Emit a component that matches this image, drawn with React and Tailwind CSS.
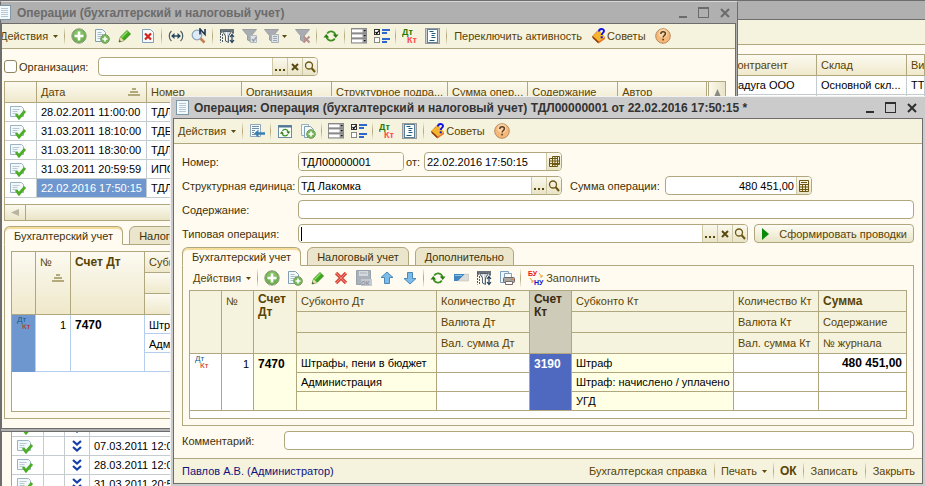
import React from "react";
import clsx from "clsx";

// ---------------- ICONS ----------------
const Svg = ({ children, w = 16 }) => (
  <svg width={w} height="16" viewBox={`0 0 ${w} 16`} fill="none" className="shrink-0" aria-hidden="true">
    {children}
  </svg>
);

const PlusIcon = () => (
  <Svg>
    <circle cx="8" cy="8" r="7.2" fill="#6fb04f" stroke="#8a9a80" />
    <circle cx="8" cy="6.5" r="5" fill="#8cc86e" opacity="0.7" />
    <path d="M8 3.5v9M3.5 8h9" stroke="#fff" strokeWidth="2.6" />
  </Svg>
);

const DocPlusIcon = () => (
  <Svg>
    <path d="M1.5 1.5h7l3 3v9h-10z" fill="#f3f8fb" stroke="#7f9fb5" />
    <path d="M3.5 4.5h4M3.5 6.5h6M3.5 8.5h4M3.5 10.5h3" stroke="#a9bfce" />
    <circle cx="11" cy="11" r="4.3" fill="#79b85a" stroke="#6f9a5c" />
    <path d="M11 8.5v5M8.5 11h5" stroke="#fff" strokeWidth="1.6" />
  </Svg>
);

const CopyPlusIcon = () => (
  <Svg>
    <path d="M1.5 1.5h7v11h-7z" fill="#f3f8fb" stroke="#9ab0c0" />
    <path d="M4.5 3.5h6l3 3v8h-9z" fill="#f3f8fb" stroke="#7f9fb5" />
    <circle cx="11" cy="11" r="4.3" fill="#79b85a" stroke="#6f9a5c" />
    <path d="M11 8.5v5M8.5 11h5" stroke="#fff" strokeWidth="1.6" />
  </Svg>
);

const PencilIcon = () => (
  <Svg>
    <path d="M2 14l1.5-5L10 2.5 13.5 6 7 12.5z" fill="#3fa81c" stroke="#2c7d12" strokeWidth="0.8" />
    <path d="M4.5 9.5L10.5 3.5" stroke="#8fe06a" strokeWidth="1.4" />
    <path d="M2 14l1.5-5 3.5 3.5z" fill="#f1d7b0" />
    <path d="M2 14l.6-2 1.4 1.4z" fill="#333" />
  </Svg>
);

const DocDeleteIcon = () => (
  <Svg>
    <path d="M2.5 1.5h8l3 3v10h-11z" fill="#f6fafc" stroke="#7f9fb5" />
    <path d="M5 5.5l6 6M11 5.5l-6 6" stroke="#d0241c" strokeWidth="2.2" />
  </Svg>
);

const RedCrossIcon = () => (
  <Svg>
    <path d="M3 3l10 10M13 3L3 13" stroke="#d8473a" strokeWidth="3.2" />
    <path d="M3 3l10 10M13 3L3 13" stroke="#f2897e" strokeWidth="1" />
  </Svg>
);

const IntervalIcon = () => (
  <Svg>
    <path d="M3.5 3C.5 5.5.5 10.5 3.5 13M12.5 3c3 2.5 3 7.5 0 10" stroke="#4b5a64" strokeWidth="1.2" />
    <path d="M4 8h8" stroke="#24465f" strokeWidth="1.4" />
    <path d="M6.5 5L3 8l3.5 3zM9.5 5L13 8l-3.500 3z" fill="#24465f" />
  </Svg>
);

const SearchNIcon = () => (
  <Svg>
    <circle cx="6" cy="7" r="4.8" fill="#dcebf7" stroke="#8aa2b8" strokeWidth="1.2" />
    <path d="M9.5 10.5l4 4" stroke="#c47f55" strokeWidth="2.6" />
    <path d="M9 6.5V1l5 5.500V1" stroke="#1d3550" strokeWidth="1.6" />
  </Svg>
);

const FilterIcon = () => (
  <Svg>
    <path d="M1 2h14M1 4h2M13 4h2" stroke="#3d4a55" strokeWidth="1.6" />
    <path d="M1.500 2v12.500M3.500 6v8.500M14 4v3" stroke="#4d5a65" strokeDasharray="2 1" />
    <path d="M3.500 3.500h9L9.500 8V14.500l-3-1.500V8z" fill="#cfd5da" stroke="#55616b" />
    <path d="M7.500 4.500v8" stroke="#fff" />
    <path d="M13 7v7M11 12l2 2.500 2-2.500M11 9l2-2.500L15 9" stroke="#1f3d5c" strokeWidth="1.2" />
  </Svg>
);

const GrayFunnel = ({ kind }) => (
  <Svg>
    <path d="M0.5 1.5h14L9.5 7.500V14l-4-2v-4.500z" fill="#a9adb1" stroke="#9a9ea2" />
    {kind === "check" && (
      <>
        <path d="M8.5 7.5h6v7h-6z" fill="#dfe3e6" stroke="#b3bac0" />
        <path d="M10 11l1.500 2 3-4" stroke="#9aa1a7" strokeWidth="1.5" />
      </>
    )}
    {kind === "list" && (
      <>
        <path d="M7.5 6.5h7v8h-7z" fill="#e0e4e7" stroke="#aab1b7" />
        <path d="M9 8.5h4M9 10.5h4M9 12.5h4" stroke="#9aa8b5" />
      </>
    )}
    {kind === "cross" && <path d="M8.5 8.5l6 6M14.500 8.500l-6 6" stroke="#b98f8d" strokeWidth="2" />}
  </Svg>
);

const RefreshShape = () => (
  <>
    <path d="M4.200 5.500C6 2.500 11 2.500 12.500 7" stroke="#3d8f1f" strokeWidth="1.8" />
    <path d="M11.800 10.500C10 13.500 5 13.500 3.500 9" stroke="#3d8f1f" strokeWidth="1.8" />
    <path d="M9.800 6.500h5.700L12.700 10z" fill="#2d7a12" />
    <path d="M.5 9.500h5.700L3.300 6z" fill="#2d7a12" />
  </>
);

const RefreshIcon = () => (
  <Svg>
    <RefreshShape />
  </Svg>
);

const WindowRefreshIcon = () => (
  <Svg>
    <rect x="1.5" y="2.5" width="13" height="12" fill="#fbfdfd" stroke="#6c8ba3" />
    <path d="M1.500 3.500h13" stroke="#4f7695" strokeWidth="2" />
    <g transform="translate(2.500 4) scale(0.700)">
      <RefreshShape />
    </g>
  </Svg>
);

const ListIcon = () => (
  <Svg>
    {[0, 5, 10].map((y) => (
      <g key={y}>
        <rect x="0.5" y={y + 0.5} width="15" height="4.5" fill="#9c9c9c" stroke="#8a8a8a" />
        <rect x="1" y={y + 1.5} width="10.5" height="2.8" fill="#fff" />
        <path d={`M12.5 ${y + 2}h2.5l-1.250 1.600z`} fill="#111" />
      </g>
    ))}
  </Svg>
);

const CheckListIcon = () => (
  <Svg>
    <rect x="0.5" y="1.5" width="5" height="5" fill="#fff" stroke="#333" />
    <path d="M1.5 4l1.300 1.500L5 2.500" stroke="#000" strokeWidth="1.2" />
    <rect x="0.5" y="9.5" width="5" height="5" fill="#fff" stroke="#888" />
    <path d="M8 2h8M8 5h5M8 11h8M8 14h5" stroke="#2f66cc" strokeWidth="2" />
  </Svg>
);

const DtKtIcon = () => (
  <Svg>
    <text x="0" y="7" fontSize="9" fontWeight="700" fill="#2a7a00">Дт</text>
    <text x="5" y="15" fontSize="9" fontWeight="700" fill="#ff4a4a">Кт</text>
  </Svg>
);

const DtKtSmall = () => (
  <Svg>
    <text x="1" y="7" fontSize="8" fill="#0f5c86">Дт</text>
    <text x="6" y="14" fontSize="8" fill="#c62316">Кт</text>
  </Svg>
);

const ReportIcon = () => (
  <Svg>
    <rect x="0.5" y="0.5" width="14" height="15" fill="#c9cdd1" stroke="#9a9a9a" />
    <rect x="2.5" y="1.5" width="10" height="13" fill="#fff" stroke="#5b7f99" />
    <path d="M4.500 3.500h4M6.500 5.500h4M6.500 7.500h3M6.500 9.500h4M4.500 12.500h5" stroke="#1b5c80" />
  </Svg>
);

const BookIcon = () => (
  <Svg>
    <path d="M7 2L1 8.500l6 6.500 2-1L5 7.500z" fill="#b4581c" />
    <path d="M8 2L1.500 8l6 5.500L14 9z" fill="#f6b52e" />
    <path d="M1.500 8l6 5.500v2L1.500 10z" fill="#8a3d10" />
    <path d="M7.500 13.500L14 9v2l-6.500 4.500z" fill="#e87722" />
    <path d="M8 3.500C8 .5 13 .2 13 3c0 1.800-2.300 2-2.300 4" stroke="#1414e0" strokeWidth="2" />
    <rect x="9.7" y="8.3" width="2" height="2" fill="#1414e0" />
  </Svg>
);

const HelpIcon = () => (
  <Svg>
    <circle cx="8" cy="8" r="7.3" fill="#f6b878" stroke="#b98a5c" />
    <circle cx="8" cy="5.5" r="4.5" fill="#fbd9ae" opacity="0.8" />
    <path d="M5.800 6c0-3 4.600-2.800 4.600-.2C10.400 7.500 8.100 7.500 8.100 9.500" stroke="#5b3b22" strokeWidth="1.5" />
    <rect x="7.3" y="10.8" width="1.6" height="1.6" fill="#5b3b22" />
  </Svg>
);

const DocArrowIcon = () => (
  <Svg>
    <path d="M1.5 1.5h10v12h-10z" fill="#f6fafc" stroke="#8fa7b8" />
    <path d="M3 3.5h7M3 5.5h7M3 7.5h3M3 9.5h2M3 11.5h3" stroke="#6f8fa6" />
    <path d="M5 10.500l4.500-4v2.700H16v2.600H9.500v2.700z" fill="#3a7fb0" />
  </Svg>
);

const SaveGrayIcon = () => (
  <Svg>
    <path d="M0.5 0.5h14v14h-14z" fill="#a9b2ba" stroke="#98a2aa" />
    <rect x="3" y="1" width="9" height="5" fill="#d3d9dd" />
    <path d="M4 3h7" stroke="#a9b2ba" />
    <rect x="5" y="9" width="11" height="7" fill="#c3c9ce" />
    <text x="5" y="15" fontSize="6" fontWeight="700" fill="#8d979f">ОК</text>
  </Svg>
);

const ArrowIcon = ({ down }) => (
  <Svg>
    <path
      d={down ? "M8 14L2 8.500h3.500V2.500h5v6H14z" : "M8 2L2 7.500h3.500v6h5v-6H14z"}
      fill="#7dbbe8"
      stroke="#4b88b8"
      strokeLinejoin="round"
    />
  </Svg>
);

const SwapIcon = () => (
  <Svg>
    <path d="M1 4h11L5 11H1z" fill="#3f86c0" />
    <path d="M12 4h3.500v7H5z" fill="#dcdcd8" stroke="#b5b5b0" strokeWidth="0.5" />
    <path d="M2 5.500h7" stroke="#8fc0e6" />
  </Svg>
);

const PrintIcon = () => (
  <Svg>
    <path d="M1.5 1.5h8v11h-8z" fill="#eef5fa" stroke="#7fa0ba" />
    <path d="M5.5 3.5h7v4h-7z" fill="#f8fbfd" stroke="#7fa0ba" />
    <rect x="4.5" y="7.5" width="11" height="5" rx="1" fill="#a9a5a2" stroke="#6d6864" />
    <path d="M6.5 11.5h7v3h-7z" fill="#fff" stroke="#7a6d66" />
    <path d="M12 9.5h2" stroke="#e0762c" />
  </Svg>
);

const FillIcon = () => (
  <Svg>
    <text x="0" y="6" fontSize="7" fontWeight="700" fill="#ee1111">БУ</text>
    <text x="6" y="15" fontSize="7" fontWeight="700" fill="#1414c8">НУ</text>
    <path d="M11 3l3 4M12 7h2V5M2 8l3 4M3 12h2v-2" stroke="#f0a030" />
  </Svg>
);

const PostedIcon = () => (
  <Svg w={17}>
    <path d="M1.5 2.5h11l2 2v8h-13z" fill="#f3f8fb" stroke="#9cb3c3" />
    <path d="M3.5 5.5h7M3.5 7.5h5M3.5 9.5h4" stroke="#b9cad6" />
    <path d="M7 10l3 4 6-7" stroke="#4cae24" strokeWidth="2.8" />
  </Svg>
);

const ChevronsIcon = () => (
  <Svg w={10}>
    <path d="M1 3l4 3.500L9 3M1 9l4 3.500L9 9" stroke="#123fa8" strokeWidth="2.2" />
  </Svg>
);

const PageIcon = () => (
  <svg width="13" height="15" viewBox="0 0 13 15" fill="none" className="shrink-0" aria-hidden="true">
    <rect x="0.5" y="0.5" width="12" height="14" fill="#f4f9fb" stroke="#7f98a8" />
    <path d="M3 3.5h7M3 5.5h7M3 7.5h7M3 9.5h7M3 11.5h7" stroke="#b5c8d4" />
  </svg>
);

const SortMark = () => (
  <svg width="12" height="8" viewBox="0 0 12 8" className="shrink-0" aria-hidden="true">
    <path d="M4 0h4v2H4zM2 3h8v2H2zM0 6h12v2H0z" fill="#b3aa7c" />
  </svg>
);

const Caret = () => (
  <svg width="5" height="3" viewBox="0 0 5 3" className="shrink-0" aria-hidden="true">
    <path d="M0 0h5L2.500 3z" fill="#5a4a10" />
  </svg>
);

const Magnifier = () => (
  <svg width="12" height="12" viewBox="0 0 12 12" fill="none" aria-hidden="true">
    <circle cx="5" cy="4.5" r="3.5" stroke="#6b5712" strokeWidth="1.3" />
    <path d="M7.500 7l3.500 4" stroke="#6b5712" strokeWidth="2" />
  </svg>
);

const Cross = () => (
  <svg width="8" height="8" viewBox="0 0 8 8" aria-hidden="true">
    <path d="M1 1l6 6M7 1L1 7" stroke="#5a4a10" strokeWidth="2" />
  </svg>
);

const Dots = () => (
  <svg width="10" height="10" viewBox="0 0 10 10" fill="#5a4a10" aria-hidden="true">
    <path d="M0 7h2v2H0zM4 7h2v2H4zM8 7h2v2H8z" />
  </svg>
);

const CalendarIcon = () => (
  <svg width="11" height="12" viewBox="0 0 11 12" fill="none" aria-hidden="true">
    <path d="M3.5 0.5h7v8h-7z" stroke="#6b5712" />
    <path d="M0.5 2.5h8v8h-8zM0.5 5h10M0.5 7.5h10M3.5 2v9M6 1v10M8.5 1v8" stroke="#6b5712" />
  </svg>
);

const CalcIcon = () => (
  <svg width="10" height="12" viewBox="0 0 10 12" fill="none" aria-hidden="true">
    <path d="M0.5 0.5h9v11h-9z" stroke="#6b5712" />
    <path d="M2 2.5h6" stroke="#6b5712" />
    <path d="M1 4.500h8M1 7h8M1 9.500h8M3.500 5v6M6.500 5v6" stroke="#6b5712" />
  </svg>
);

// ---------------- SHARED PARTS ----------------
const Sep = () => (
  <span className="w-[5px] flex justify-center shrink-0">
    <span className="w-px h-[18px] bg-gradient-to-b from-[#f5f2de] via-[#b0a67a] to-[#f5f2de]" />
  </span>
);

const Tool = ({ label, children }) => (
  <button type="button" aria-label={label} className="w-[23px] h-5 shrink-0 flex items-center justify-center">
    {children}
  </button>
);

const TextButton = ({ children, className }) => (
  <button type="button" className={clsx("flex items-center h-5 whitespace-nowrap text-[#594304]", className)}>
    {children}
  </button>
);

const ActionsMenu = () => (
  <TextButton className="gap-[5px] px-1">
    Действия
    <Caret />
  </TextButton>
);

const WindowControls = ({ color }) => (
  <div className={clsx("flex items-center gap-[11px]", color)}>
    <button type="button" aria-label="Свернуть" className="h-[11px] flex items-end">
      <span className="w-2 h-[2px] bg-current" />
    </button>
    <button type="button" aria-label="Развернуть" className="size-[11px] border border-current border-t-2" />
    <button type="button" aria-label="Закрыть окно">
      <svg width="10" height="10" viewBox="0 0 10 10" aria-hidden="true">
        <path d="M1 1l8 8M9 1L1 9" stroke="currentColor" strokeWidth="2" />
      </svg>
    </button>
  </div>
);

const fieldIcons = {
  dots: { label: "Выбрать", icon: <Dots /> },
  clear: { label: "Очистить", icon: <Cross /> },
  open: { label: "Открыть", icon: <Magnifier /> },
  calendar: { label: "Календарь", icon: <CalendarIcon /> },
  calc: { label: "Калькулятор", icon: <CalcIcon /> },
};

const Field = ({ id, value = "", buttons = [], className, inputClass, caret }) => (
  <div className={clsx("flex items-center h-[19px] border border-[#b0a77f] rounded-[4px] bg-white overflow-hidden", className)}>
    {caret && <span className="w-px h-[14px] ml-[2px] bg-black" />}
    <input
      id={id}
      defaultValue={value}
      className={clsx("flex-1 min-w-0 h-full px-[2px] text-black outline-none", inputClass)}
    />
    {buttons.map((name) => (
      <button
        key={name}
        type="button"
        aria-label={fieldIcons[name].label}
        className="w-[15px] h-full shrink-0 flex items-center justify-center border-l border-[#cfc8a4] bg-gradient-to-b from-[#fbf9ee] to-[#e9e4c6]"
      >
        {fieldIcons[name].icon}
      </button>
    ))}
  </div>
);

const Tab = ({ active, children }) => (
  <button
    type="button"
    role="tab"
    aria-selected={!!active}
    className={clsx(
      "h-[19px] px-[9px] border border-[#b0a77f] rounded-t-[6px] whitespace-nowrap text-[#3f3208]",
      active ? "bg-[#fffbf0] border-b-[#fffbf0] shadow-[inset_0_2px_0_#f7dd9b]" : "bg-[#ebe5cb]"
    )}
  >
    {children}
  </button>
);

const headGradient = "bg-gradient-to-b from-[#fcfaf1] to-[#efe8ca]";

// ---------------- DOCUMENT JOURNAL (bottom window) ----------------
const journalRows = Array.from({ length: 22 }, () => ({}));
journalRows[0] = { partner: "Радуга ООО", store: "Основной скл...", kind: "ТТН" };
journalRows[19] = { date: "07.03.2011 12:00:00" };
journalRows[20] = { date: "28.03.2011 12:00:00" };
journalRows[21] = { date: "31.03.2011 20:59:59" };

const JournalWindow = () => {
  const cell = "border-r border-b border-[#c5ccd0] h-[19px] p-0 whitespace-nowrap overflow-hidden";
  const head = "border-r border-b border-[#b0a77f] h-[21px] px-1 text-left font-normal whitespace-nowrap overflow-hidden";
  return (
    <section className="h-full overflow-hidden border-l-2 border-t border-[#6d6d6d] bg-[#fffbf0]">
      <div className="h-[18px] bg-[#b0b0b0]" />
      <div className="h-[26px] border-y border-t-[#6d6d6d] border-b-[#b0a77f] bg-[#f5f2de]" />
      <div className="mt-[9px] ml-[9px] border-l border-t border-[#b0a77f] bg-white">
        <table className="w-full table-fixed border-separate border-spacing-0">
          <colgroup>
            <col className="w-8" />
            <col className="w-[21px]" />
            <col className="w-[25px]" />
            <col />
            <col className="w-[90px]" />
            <col className="w-[90px]" />
            <col className="w-[18px]" />
          </colgroup>
          <thead className={clsx(headGradient, "text-[#594304]")}>
            <tr>
              <th className={head} />
              <th className={head} />
              <th className={head} />
              <th className={head} />
              <th className={head}>Контрагент</th>
              <th className={head}>Склад</th>
              <th className={head}>Вид</th>
            </tr>
          </thead>
          <tbody className="text-black">
            {journalRows.map((row, index) => (
              <tr key={index}>
                <td className={clsx(cell, "pl-1")}><PostedIcon /></td>
                <td className={cell} />
                <td className={cell}>
                  <div className="flex justify-center"><ChevronsIcon /></div>
                </td>
                <td className={clsx(cell, "pl-1")}>{row.date}</td>
                <td className={clsx(cell, "pl-1")}>{row.partner}</td>
                <td className={clsx(cell, "pl-1")}>{row.store}</td>
                <td className={clsx(cell, "pl-1")}>{row.kind}</td>
              </tr>
            ))}
          </tbody>
        </table>
      </div>
    </section>
  );
};

// ---------------- OPERATIONS LIST ----------------
const operations = [
  { date: "28.02.2011 11:00:00", number: "ТДЛ" },
  { date: "31.03.2011 18:10:00", number: "ТДЕ" },
  { date: "31.03.2011 18:30:00", number: "ТДЛ" },
  { date: "31.03.2011 20:59:59", number: "ИПО" },
  { date: "22.02.2016 17:50:15", number: "ТДЛ", selected: true },
];

const OperationsTable = () => {
  const head = "border-r border-b border-[#b0a77f] h-[21px] px-1 text-left font-normal whitespace-nowrap overflow-hidden";
  const cell = "border-r border-b border-[#c5ccd0] h-[19px] p-0 pl-1 whitespace-nowrap overflow-hidden";
  return (
    <div className="border border-[#b0a77f] bg-white">
      <div className="flex">
        <table className="flex-1 table-fixed border-separate border-spacing-0">
          <colgroup>
            <col className="w-8" />
            <col className="w-[110px]" />
            <col className="w-[95px]" />
            <col className="w-[90px]" />
            <col className="w-[116px]" />
            <col className="w-20" />
            <col className="w-[90px]" />
            <col />
          </colgroup>
          <thead className={clsx(headGradient, "text-[#594304]")}>
            <tr>
              <th className={head} />
              <th className={head}>
                <div className="flex items-center justify-between pr-[2px]">
                  Дата
                  <SortMark />
                </div>
              </th>
              <th className={head}>Номер</th>
              <th className={head}>Организация</th>
              <th className={head}>Структурное подра...</th>
              <th className={head}>Сумма опер...</th>
              <th className={head}>Содержание</th>
              <th className={head}>Автор</th>
            </tr>
          </thead>
          <tbody className="text-black">
            {operations.map((row) => (
              <tr key={row.date}>
                <td className={cell}><PostedIcon /></td>
                <td className={clsx(cell, row.selected && "bg-[#6f97cf] text-white")}>{row.date}</td>
                <td className={cell}>{row.number}</td>
                <td className={cell} />
                <td className={cell} />
                <td className={cell} />
                <td className={cell} />
                <td className={cell} />
              </tr>
            ))}
          </tbody>
        </table>
        <div className="w-[17px] ml-px border-l border-[#b0a77f] bg-gradient-to-r from-[#fbf9ee] to-[#e9e4c6]">
          <div className="h-[21px] flex items-center justify-center">
            <svg width="7" height="8" viewBox="0 0 7 8" aria-hidden="true">
              <path d="M3.5 0L7 8H0z" fill="#8a8a80" />
            </svg>
          </div>
        </div>
      </div>
      <div className="mt-[6px] h-4 flex border-t border-[#b0a77f] bg-gradient-to-b from-[#fbf9ee] to-[#e9e4c6]">
        <div className="w-[21px] flex items-center justify-center border-r border-[#b0a77f]">
          <svg width="8" height="7" viewBox="0 0 8 7" aria-hidden="true">
            <path d="M8 0v7L0 3.500z" fill="#b9b4a0" />
          </svg>
        </div>
      </div>
    </div>
  );
};

const OperationEntries = () => {
  const head = "border-r border-b border-[#b0a77f] px-1 text-left align-top font-normal whitespace-nowrap";
  const cell = "border-r border-b border-[#b5cdee] px-1 align-top whitespace-nowrap";
  return (
    <div className="border border-[#b0a77f] bg-white pb-[39px]">
      <table className="w-full table-fixed border-separate border-spacing-0">
        <colgroup>
          <col className="w-6" />
          <col className="w-[35px]" />
          <col className="w-[74px]" />
          <col />
        </colgroup>
        <thead className="bg-[#f5f0da] text-[#594304]">
          <tr>
            <th rowSpan={3} className={clsx(head, headGradient)} />
            <th rowSpan={3} className={clsx(head, headGradient, "py-[2px]")}>
              №
              <div className="flex justify-end pt-1 pr-[2px]"><SortMark /></div>
            </th>
            <th rowSpan={3} className={clsx(head, headGradient, "py-[2px] text-[12px]")}>
              <b>Счет Дт</b>
            </th>
            <th className={clsx(head, headGradient, "h-[21px] py-[2px]")}>Субконто Дт</th>
          </tr>
          <tr><th className={clsx(head, headGradient, "h-[21px]")} /></tr>
          <tr><th className={clsx(head, headGradient, "h-[21px]")} /></tr>
        </thead>
        <tbody className="text-black">
          <tr>
            <td rowSpan={3} className="border-r border-[#b5cdee] bg-[#6f97cf] align-top pl-1"><DtKtSmall /></td>
            <td rowSpan={3} className={clsx(cell, "text-right pt-[2px]")}>1</td>
            <td rowSpan={3} className={clsx(cell, "text-[12px] font-bold pt-[2px]")}>7470</td>
            <td className={clsx(cell, "h-[19px] pt-[2px]")}>Штрафы</td>
          </tr>
          <tr><td className={clsx(cell, "h-[19px] pt-[2px]")}>Администрация</td></tr>
          <tr><td className={clsx(cell, "h-[19px]")} /></tr>
        </tbody>
      </table>
    </div>
  );
};

const OperationsWindow = () => (
  <section className="absolute left-0 right-[187px] top-px border-x border-b border-[#6d6d6d] border-t border-t-[#d8d8d8] bg-[#b0b0b0] pb-[2px] pr-px">
    <div className="h-[21px] flex items-center justify-between pr-[6px] text-[#6b6b6b]">
      <div className="flex items-center gap-[6px] -ml-[3px]">
        <PageIcon />
        <h2 className="text-[12px] font-bold whitespace-nowrap">Операции (бухгалтерский и налоговый учет)</h2>
      </div>
      <WindowControls color="text-[#6b6b6b]" />
    </div>
    <div className="border border-[#6d6d6d] bg-[#fffbf0]">
      {/* Toolbar */}
      <div className="h-[25px] flex items-center border-b border-[#b0a77f] bg-[#f5f2de] overflow-hidden">
        <TextButton className="gap-[5px] -ml-[2px] pr-1">
          Действия
          <Caret />
        </TextButton>
        <Sep />
        <Tool label="Добавить"><PlusIcon /></Tool>
        <Tool label="Добавить копированием"><DocPlusIcon /></Tool>
        <Tool label="Изменить"><PencilIcon /></Tool>
        <Tool label="Пометить на удаление"><DocDeleteIcon /></Tool>
        <Sep />
        <Tool label="Интервал дат"><IntervalIcon /></Tool>
        <Tool label="Поиск по номеру"><SearchNIcon /></Tool>
        <Sep />
        <Tool label="Отбор и сортировка"><FilterIcon /></Tool>
        <Tool label="Отбор по значению"><GrayFunnel kind="check" /></Tool>
        <button type="button" aria-label="История отборов" className="w-[30px] h-5 shrink-0 flex items-center gap-[2px] pl-[3px]">
          <GrayFunnel kind="list" />
          <Caret />
        </button>
        <Tool label="Отключить отбор"><GrayFunnel kind="cross" /></Tool>
        <Sep />
        <Tool label="Обновить"><RefreshIcon /></Tool>
        <Sep />
        <Tool label="Список"><ListIcon /></Tool>
        <Tool label="Настройка списка"><CheckListIcon /></Tool>
        <Sep />
        <Tool label="Дт/Кт"><DtKtIcon /></Tool>
        <Tool label="Отчет"><ReportIcon /></Tool>
        <Sep />
        <TextButton className="px-[5px]">Переключить активность</TextButton>
        <TextButton className="pl-1 pr-[6px]">
          <BookIcon />
          Советы
        </TextButton>
        <Tool label="Справка"><HelpIcon /></Tool>
      </div>

      <div className="pl-[2px] pr-[9px] pb-[9px]">
        {/* Filter */}
        <div className="flex items-center pt-2 pb-[5px]">
          <input
            id="org-filter"
            type="checkbox"
            className="appearance-none size-[13px] border border-[#8f8660] rounded-[3px] bg-white"
          />
          <label htmlFor="org-filter" className="w-[81px] pl-[2px] text-[#3f3208]">Организация:</label>
          <Field id="org-value" buttons={["dots", "clear", "open"]} className="w-[220px]" />
        </div>

        <OperationsTable />

        <div role="tablist" className="relative flex gap-[6px] mt-[5px]">
          <Tab active>Бухгалтерский учет</Tab>
          <Tab>Налоговый учет</Tab>
        </div>
        <div className="-mt-px border border-[#b0a77f] p-[6px]">
          <OperationEntries />
        </div>
      </div>
    </div>
  </section>
);

// ---------------- OPERATION CARD ----------------
const EntriesTable = () => {
  const line = "border-r border-b border-[#b0a77f] last:border-r-0 px-1 whitespace-nowrap overflow-hidden";
  const head = clsx(line, "h-[21px] py-0 text-left font-normal");
  const top = clsx(line, "align-top pt-[2px] text-left");
  const cell = clsx(line, "h-[19px] py-0");
  return (
    <div className="border border-[#b0a77f] bg-white pb-[7px]">
      <table className="w-full table-fixed border-separate border-spacing-0">
        <colgroup>
          <col className="w-8" />
          <col className="w-8" />
          <col className="w-[43px]" />
          <col className="w-[140px]" />
          <col className="w-[93px]" />
          <col className="w-[42px]" />
          <col />
          <col className="w-[85px]" />
          <col className="w-[87px]" />
        </colgroup>
        <thead className="bg-[#f5f2de] text-[#594304]">
          <tr>
            <th rowSpan={3} className={top} />
            <th rowSpan={3} className={clsx(top, "font-normal")}>№</th>
            <th rowSpan={3} className={clsx(top, "text-[12px] leading-[13px] font-bold")}>Счет<br />Дт</th>
            <th className={head}>Субконто Дт</th>
            <th className={head}>Количество Дт</th>
            <th rowSpan={3} className={clsx(top, "bg-[#cfcbb9] text-[#3a2a10] text-[12px] leading-[13px] font-bold")}>Счет<br />Кт</th>
            <th className={head}>Субконто Кт</th>
            <th className={head}>Количество Кт</th>
            <th className={head}><b className="text-[12px]">Сумма</b></th>
          </tr>
          <tr>
            <th className={head} />
            <th className={head}>Валюта Дт</th>
            <th className={head} />
            <th className={head}>Валюта Кт</th>
            <th className={head}>Содержание</th>
          </tr>
          <tr>
            <th className={head} />
            <th className={head}>Вал. сумма Дт</th>
            <th className={head} />
            <th className={head}>Вал. сумма Кт</th>
            <th className={head}>№ журнала</th>
          </tr>
        </thead>
        <tbody className="text-black">
          <tr>
            <td rowSpan={3} className={line + " align-top"}><DtKtSmall /></td>
            <td rowSpan={3} className={clsx(line, "align-top pt-[2px] text-right")}>1</td>
            <td rowSpan={3} className={clsx(top, "bg-[#ffffe6] text-[12px] font-bold")}>7470</td>
            <td className={clsx(cell, "bg-[#ffffe6]")}>Штрафы, пени в бюджет</td>
            <td className={cell} />
            <td rowSpan={3} className={clsx(top, "bg-[#5069c0] text-white text-[12px] font-bold")}>3190</td>
            <td className={clsx(cell, "bg-[#ffffe6]")}>Штраф</td>
            <td className={cell} />
            <td className={clsx(cell, "text-right text-[12px] font-bold")}>480 451,00</td>
          </tr>
          <tr>
            <td className={clsx(cell, "bg-[#ffffe6]")}>Администрация</td>
            <td className={cell} />
            <td className={clsx(cell, "bg-[#ffffe6]")}>Штраф: начислено / уплачено</td>
            <td className={cell} />
            <td className={cell} />
          </tr>
          <tr>
            <td className={clsx(cell, "bg-[#ffffe6]")} />
            <td className={cell} />
            <td className={clsx(cell, "bg-[#ffffe6]")}>УГД</td>
            <td className={cell} />
            <td className={cell} />
          </tr>
        </tbody>
      </table>
    </div>
  );
};

const OperationCard = () => {
  const label = "w-[116px] shrink-0 whitespace-nowrap";
  return (
    <section className="absolute left-[170px] right-0 top-[96px] border-l border-t border-[#f2f2f2] bg-[#cbcbcb] px-[2px] pb-[2px]">
      <div className="h-[21px] flex items-center justify-between pl-[3px] pr-[6px]">
        <div className="flex items-center gap-[5px] text-[#333]">
          <PageIcon />
          <h2 className="text-[12px] font-bold whitespace-nowrap">
            Операция: Операция (бухгалтерский и налоговый учет) ТДЛ00000001 от 22.02.2016 17:50:15 *
          </h2>
        </div>
        <WindowControls color="text-[#2e2e2e]" />
      </div>

      <div className="border border-[#6d6d6d] bg-[#fffbf0] text-[#3f3208]">
        {/* Toolbar */}
        <div className="h-[25px] flex items-center border-b border-[#b0a77f] bg-[#f5f2de]">
          <ActionsMenu />
          <Sep />
          <Tool label="Перейти"><DocArrowIcon /></Tool>
          <Sep />
          <Tool label="Перечитать"><WindowRefreshIcon /></Tool>
          <Tool label="Скопировать"><CopyPlusIcon /></Tool>
          <Sep />
          <Tool label="Список"><ListIcon /></Tool>
          <Tool label="Настройка"><CheckListIcon /></Tool>
          <Sep />
          <Tool label="Дт/Кт"><DtKtIcon /></Tool>
          <Tool label="Отчет"><ReportIcon /></Tool>
          <Sep />
          <TextButton className="pl-1 pr-[6px]">
            <BookIcon />
            Советы
          </TextButton>
          <Tool label="Справка"><HelpIcon /></Tool>
        </div>

        {/* Form */}
        <div className="px-2 pt-2 pb-2">
          <div className="flex flex-col gap-[5px]">
            <div className="flex items-center">
              <label htmlFor="number" className={label}>Номер:</label>
              <Field id="number" value="ТДЛ00000001" className="w-[106px]" inputClass="bg-[#fffbf0]" />
              <label htmlFor="date" className="w-5 pl-[2px]">от:</label>
              <Field id="date" value="22.02.2016 17:50:15" buttons={["calendar"]} className="w-[138px]" />
            </div>
            <div className="flex items-center">
              <label htmlFor="unit" className={label}>Структурная единица:</label>
              <Field id="unit" value="ТД Лакомка" buttons={["dots", "open"]} className="w-[264px]" />
              <label htmlFor="total" className="w-[103px] pl-2 whitespace-nowrap">Сумма операции:</label>
              <Field id="total" value="480 451,00" buttons={["calc"]} className="w-[147px]" inputClass="text-right" />
            </div>
            <div className="flex items-center">
              <label htmlFor="content" className={label}>Содержание:</label>
              <Field id="content" className="flex-1" />
            </div>
            <div className="flex items-center">
              <label htmlFor="template" className={label}>Типовая операция:</label>
              <Field id="template" buttons={["dots", "clear", "open"]} className="flex-1" caret />
              <button
                type="button"
                className="w-40 h-[19px] ml-[6px] flex items-center justify-between pl-[7px] pr-[6px] border border-[#b0a77f] rounded-[4px] bg-gradient-to-b from-[#fdfcf5] to-[#e9e4c6] whitespace-nowrap text-[#594304]"
              >
                <svg width="7" height="12" viewBox="0 0 7 12" aria-hidden="true">
                  <path d="M0 0l7 6-7 6z" fill="#0a8a0a" />
                </svg>
                Сформировать проводки
              </button>
            </div>
          </div>

          <div role="tablist" className="relative flex gap-[6px] mt-1">
            <Tab active>Бухгалтерский учет</Tab>
            <Tab>Налоговый учет</Tab>
            <Tab>Дополнительно</Tab>
          </div>
          <div className="-mt-px border border-[#b0a77f] px-[6px] pb-[6px]">
            <div className="h-6 flex items-center">
              <ActionsMenu />
              <Sep />
              <Tool label="Добавить строку"><PlusIcon /></Tool>
              <Tool label="Скопировать строку"><DocPlusIcon /></Tool>
              <Tool label="Изменить строку"><PencilIcon /></Tool>
              <Tool label="Удалить строку"><RedCrossIcon /></Tool>
              <Tool label="Закончить редактирование"><SaveGrayIcon /></Tool>
              <Tool label="Вверх"><ArrowIcon /></Tool>
              <Tool label="Вниз"><ArrowIcon down /></Tool>
              <Sep />
              <Tool label="Обновить проводки"><RefreshIcon /></Tool>
              <Tool label="Активность"><SwapIcon /></Tool>
              <Tool label="Отбор"><FilterIcon /></Tool>
              <Tool label="Печать списка"><PrintIcon /></Tool>
              <Sep />
              <TextButton className="pl-[5px] gap-[2px]">
                <FillIcon />
                Заполнить
              </TextButton>
            </div>
            <EntriesTable />
          </div>

          <div className="flex items-center mt-[5px]">
            <label htmlFor="comment" className="w-[102px] shrink-0">Комментарий:</label>
            <Field id="comment" className="flex-1" />
          </div>
        </div>

        {/* Footer */}
        <div className="h-[25px] flex items-center justify-between border-t border-[#b0a77f] bg-[#f5f2de] pl-2">
          <span className="text-[#12127c] whitespace-nowrap">Павлов А.В. (Администратор)</span>
          <div className="flex items-center">
            <TextButton className="px-[5px]">Бухгалтерская справка</TextButton>
            <Sep />
            <TextButton className="gap-[5px] px-1">
              Печать
              <Caret />
            </TextButton>
            <Sep />
            <TextButton className="px-1 text-[12px] font-bold">ОК</TextButton>
            <Sep />
            <TextButton className="px-[5px]">Записать</TextButton>
            <Sep />
            <TextButton className="pl-[5px] pr-[7px]">Закрыть</TextButton>
          </div>
        </div>
      </div>
    </section>
  );
};

const App = () => {
  return (
    <main className="relative h-screen overflow-hidden bg-[#b0b0b0] font-['Liberation_Sans',Arial,sans-serif] text-[11px] leading-4">
      <JournalWindow />
      <OperationsWindow />
      <OperationCard />
    </main>
  );
};

export default App;
